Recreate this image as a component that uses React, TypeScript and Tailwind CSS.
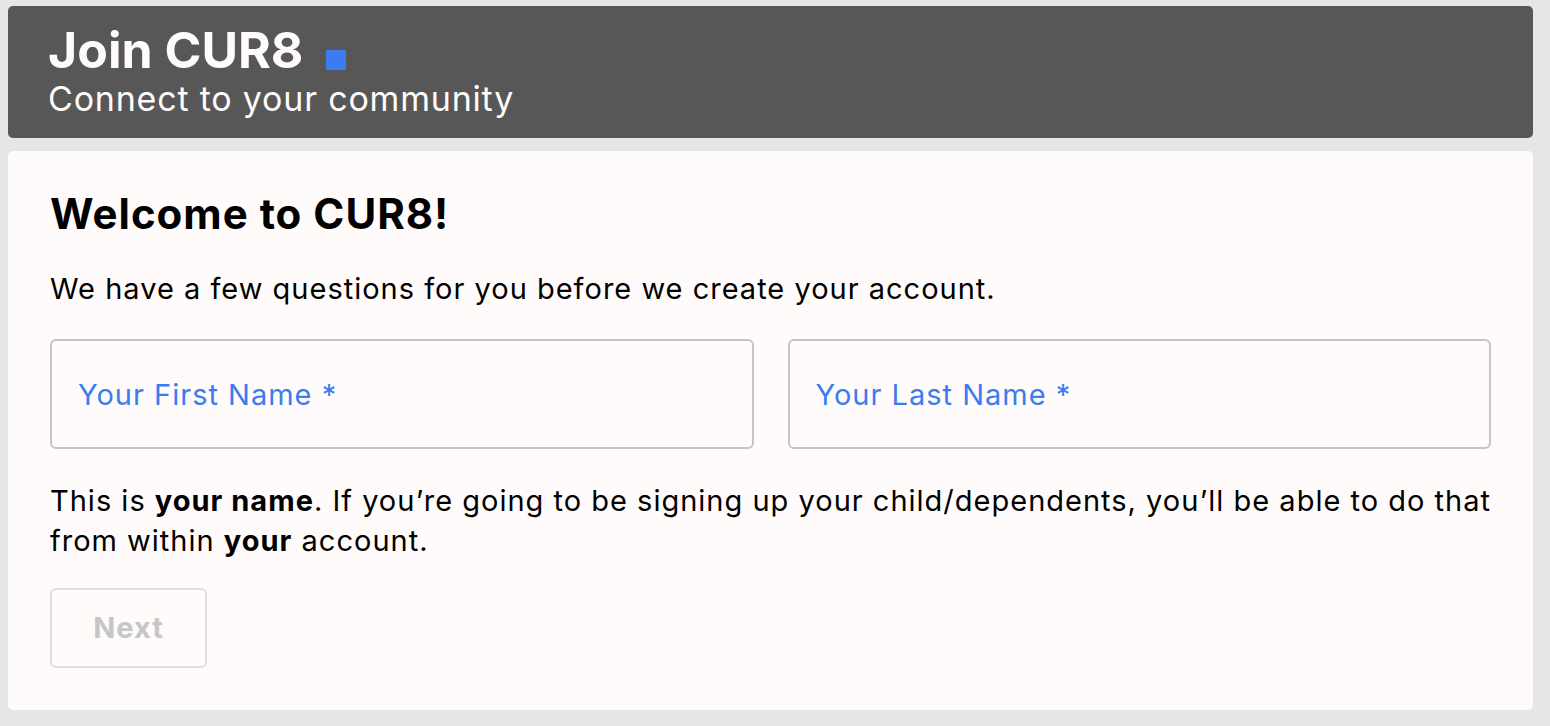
export default function App() {
  return (
    <div
      className="min-h-screen bg-[#e6e6e6] pl-2 pr-[17px] pt-[6px] pb-4"
      style={{ fontFamily: 'Inter, "Noto Sans", "Liberation Sans", sans-serif' }}
    >
      {/* Header */}
      <div className="h-[132px] rounded-[5px] bg-[#575757] px-10 pt-[16px] text-[#fffbfa]">
        <div className="flex items-end gap-[23px]">
          <h1 className="text-[50px] leading-[56px] font-bold tracking-[0px]">Join CUR8</h1>
          <span className="mb-[8px] block h-5 w-5 bg-[#3b7cee]" />
        </div>
        <p className="mt-[1px] text-[34px] leading-[40px] font-normal tracking-[0.8px]">Connect to your community</p>
      </div>

      {/* Card */}
      <div className="mt-[13px] h-[559px] rounded-[5px] bg-[#fffbfa] px-[42px] pt-[35px]">
        <h2 className="text-[42px] leading-[56px] font-bold tracking-[1px] text-black">Welcome to CUR8!</h2>
        <p className="mt-[27px] text-[29px] leading-[40px] tracking-[1px] text-black">
          We have a few questions for you before we create your account.
        </p>

        <div className="mt-[30px] grid grid-cols-2 gap-[34px]">
          <input
            placeholder="Your First Name *"
            className="h-[110px] rounded-[6px] border-2 border-[#c4c4c4] bg-transparent px-[26px] text-[29px] tracking-[1px] outline-none placeholder:text-[#3b7cee]"
          />
          <input
            placeholder="Your Last Name *"
            className="h-[110px] rounded-[6px] border-2 border-[#c4c4c4] bg-transparent px-[26px] text-[29px] tracking-[1px] outline-none placeholder:text-[#3b7cee]"
          />
        </div>

        <p className="mt-[32px] text-[29px] leading-[40px] tracking-[1px] text-black">
          This is <b className="font-bold">your name</b>. If you’re going to be signing up your child/dependents,
          you’ll be able to do that from within <b className="font-bold">your</b> account.
        </p>

        <button
          disabled
          className="mt-[27px] h-[80px] w-[157px] rounded-[6px] border-2 border-[#dedede] text-[29px] font-bold tracking-[1px] text-[#c6c6c6]"
        >
          Next
        </button>
      </div>
    </div>
  );
}
